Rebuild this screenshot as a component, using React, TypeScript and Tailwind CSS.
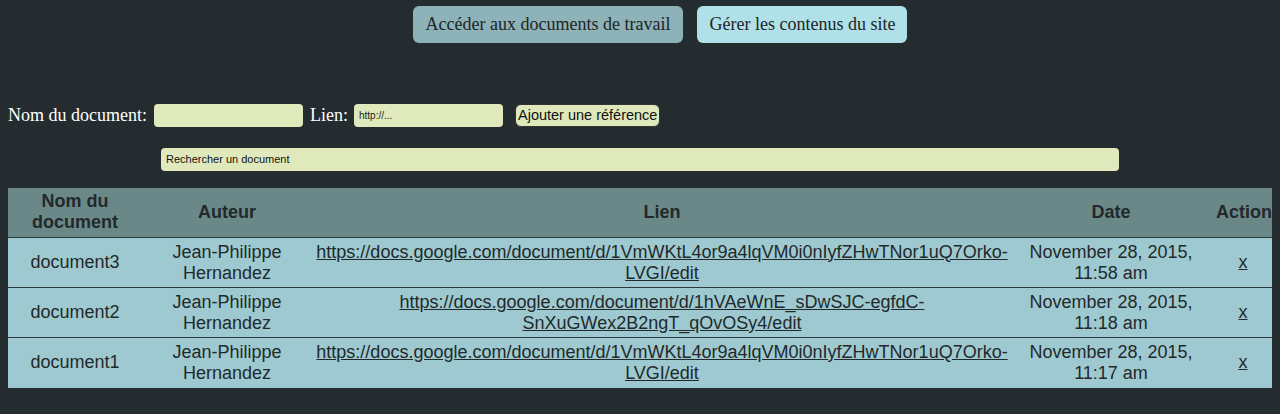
import React from "react";

const rows = [
  {
    name: "document3",
    link: "https://docs.google.com/document/d/1VmWKtL4or9a4lqVM0i0nIyfZHwTNor1uQ7Orko-LVGI/edit",
    date: ["November 28, 2015,", "11:58 am"],
  },
  {
    name: "document2",
    link: "https://docs.google.com/document/d/1hVAeWnE_sDwSJC-egfdC-SnXuGWex2B2ngT_qOvOSy4/edit",
    date: ["November 28, 2015,", "11:18 am"],
  },
  {
    name: "document1",
    link: "https://docs.google.com/document/d/1VmWKtL4or9a4lqVM0i0nIyfZHwTNor1uQ7Orko-LVGI/edit",
    date: ["November 28, 2015,", "11:17 am"],
  },
];

export default function App() {
  return (
    <div className="w-[1280px] h-[414px] bg-[#242c2f] overflow-hidden">
      <div className="flex justify-center gap-[14px] pt-[6px] pl-[40px]">
        <button className="h-[37px] px-[13px] rounded-[6px] bg-[#8db2b7] text-[#1f2426] text-[18px] font-['Liberation_Serif',serif]">
          Accéder aux documents de travail
        </button>
        <button className="h-[37px] px-[12px] rounded-[6px] bg-[#b0e0e8] text-[#1f2426] text-[18px] font-['Liberation_Serif',serif]">
          Gérer les contenus du site
        </button>
      </div>

      <div className="flex items-center mt-[60px] pl-[8px] h-[24px]">
        <span className="text-white text-[18px] font-['Liberation_Serif',serif]">Nom du document:</span>
        <input className="ml-[7px] w-[149px] h-[23px] rounded-[4px] bg-[#e0e9bc] outline-none" />
        <span className="ml-[7px] text-white text-[18px] font-['Liberation_Serif',serif]">Lien:</span>
        <input
          placeholder="http://..."
          className="ml-[6px] w-[149px] h-[23px] rounded-[4px] bg-[#e0e9bc] outline-none px-[5px] text-[10px] placeholder:text-[#222] font-['Liberation_Sans',sans-serif]"
        />
        <button className="ml-[12px] h-[23px] px-[2px] rounded-[6px] bg-[#e0e9bc] border border-[#333] text-[#111] text-[14.5px] font-['Liberation_Sans',sans-serif]">
          Ajouter une référence
        </button>
      </div>

      <div className="mt-[18px] pl-[161px]">
        <input
          placeholder="Rechercher un document"
          className="w-[958px] h-[23px] rounded-[4px] bg-[#e0e9bc] outline-none px-[5px] text-[11px] placeholder:text-[#111] font-['Liberation_Sans',sans-serif]"
        />
      </div>

      <table className="mt-[17px] ml-[8px] w-[1264px] table-fixed border-collapse font-['Liberation_Sans',sans-serif] text-[18px] text-[#22292b] leading-[21px]">
        <colgroup>
          <col className="w-[134px]" />
          <col className="w-[170px]" />
          <col className="w-[700px]" />
          <col className="w-[198px]" />
          <col className="w-[62px]" />
        </colgroup>
        <thead>
          <tr className="bg-[#6b8889] h-[50px]">
            <th className="font-bold text-center">Nom du<br />document</th>
            <th className="font-bold text-center">Auteur</th>
            <th className="font-bold text-center">Lien</th>
            <th className="font-bold text-center">Date</th>
            <th className="font-bold text-right whitespace-nowrap">Action</th>
          </tr>
        </thead>
        <tbody>
          {rows.map((r) => (
            <tr key={r.name} className="bg-[#9fc9d0] h-[50px] border-t-[1.5px] border-[#2d3a3d]">
              <td className="text-center">{r.name}</td>
              <td className="text-center">Jean-Philippe<br />Hernandez</td>
              <td className="text-center px-[4px]">
                <a className="underline break-words">{r.link}</a>
              </td>
              <td className="text-center">{r.date[0]}<br />{r.date[1]}</td>
              <td className="text-center pl-[4px]"><a className="underline">x</a></td>
            </tr>
          ))}
        </tbody>
      </table>
    </div>
  );
}
